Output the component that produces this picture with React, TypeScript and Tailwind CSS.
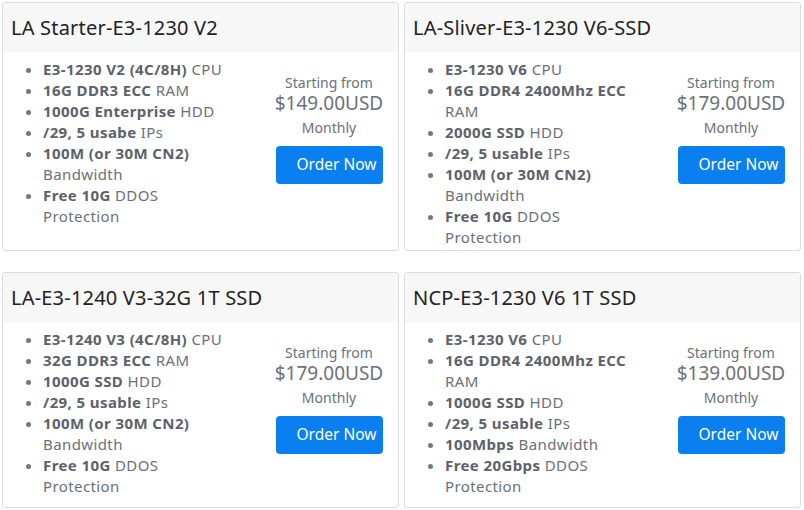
import React from 'react'

type Spec = { b: string; t: string }

interface Plan {
  title: string
  price: string
  specs: Spec[]
}

const plans: Plan[] = [
  {
    title: 'LA Starter-E3-1230 V2',
    price: '$149.00USD',
    specs: [
      { b: 'E3-1230 V2 (4C/8H)', t: 'CPU' },
      { b: '16G DDR3 ECC', t: 'RAM' },
      { b: '1000G Enterprise', t: 'HDD' },
      { b: '/29, 5 usabe', t: 'IPs' },
      { b: '100M (or 30M CN2)', t: 'Bandwidth' },
      { b: 'Free 10G', t: 'DDOS Protection' }
    ]
  },
  {
    title: 'LA-Sliver-E3-1230 V6-SSD',
    price: '$179.00USD',
    specs: [
      { b: 'E3-1230 V6', t: 'CPU' },
      { b: '16G DDR4 2400Mhz ECC', t: 'RAM' },
      { b: '2000G SSD', t: 'HDD' },
      { b: '/29, 5 usable', t: 'IPs' },
      { b: '100M (or 30M CN2)', t: 'Bandwidth' },
      { b: 'Free 10G', t: 'DDOS Protection' }
    ]
  },
  {
    title: 'LA-E3-1240 V3-32G 1T SSD',
    price: '$179.00USD',
    specs: [
      { b: 'E3-1240 V3 (4C/8H)', t: 'CPU' },
      { b: '32G DDR3 ECC', t: 'RAM' },
      { b: '1000G SSD', t: 'HDD' },
      { b: '/29, 5 usable', t: 'IPs' },
      { b: '100M (or 30M CN2)', t: 'Bandwidth' },
      { b: 'Free 10G', t: 'DDOS Protection' }
    ]
  },
  {
    title: 'NCP-E3-1230 V6 1T SSD',
    price: '$139.00USD',
    specs: [
      { b: 'E3-1230 V6', t: 'CPU' },
      { b: '16G DDR4 2400Mhz ECC', t: 'RAM' },
      { b: '1000G SSD', t: 'HDD' },
      { b: '/29, 5 usable', t: 'IPs' },
      { b: '100Mbps', t: 'Bandwidth' },
      { b: 'Free 20Gbps', t: 'DDOS Protection' }
    ]
  }
]

function PlanCard({ plan }: { plan: Plan }) {
  return (
    <div className="flex-1 flex flex-col border border-[#dcdcdc] rounded-[3px] overflow-hidden bg-white">
      {/* Header */}
      <div className="h-[49px] shrink-0 bg-[#f7f7f7] flex items-center pl-[8px] text-[20px] text-[#222] tracking-[0.2px]">
        {plan.title}
      </div>

      {/* Body */}
      <div className="flex flex-1">
        <ul className="flex-1 list-disc pl-[40px] pr-[32px] pt-[7px] text-[15px] leading-[21px] tracking-[0.4px] text-[#6b7079] marker:text-[#777]">
          {plan.specs.map((s, i) => (
            <li key={i}>
              <span className="font-bold text-[#5c626b]">{s.b}</span> {s.t}
            </li>
          ))}
        </ul>

        <div className="w-[138px] shrink-0 flex flex-col items-center pt-[21px] text-[#6c7178]">
          <div className="text-[14px] leading-[19px]">Starting from</div>
          <div className="text-[19px] leading-[22px]">{plan.price}</div>
          <div className="text-[14px] leading-[19px] mt-[4px]">Monthly</div>
          <button className="mt-[9px] w-[107px] h-[38px] rounded-[4px] bg-[#0a80f0] text-white text-[15.5px] text-left pl-[21px]">
            Order Now
          </button>
        </div>
      </div>
    </div>
  )
}

export default function App() {
  return (
    <div
      className="w-[804px] h-[510px] bg-white pl-[2px] pr-[3px] pt-[2px] flex flex-col gap-[21px]"
      style={{ fontFamily: '"Noto Sans", "Open Sans", sans-serif' }}
    >
      <div className="flex gap-[5px] h-[249px]">
        <PlanCard plan={plans[0]} />
        <PlanCard plan={plans[1]} />
      </div>
      <div className="flex gap-[5px] h-[236px]">
        <PlanCard plan={plans[2]} />
        <PlanCard plan={plans[3]} />
      </div>
    </div>
  )
}
